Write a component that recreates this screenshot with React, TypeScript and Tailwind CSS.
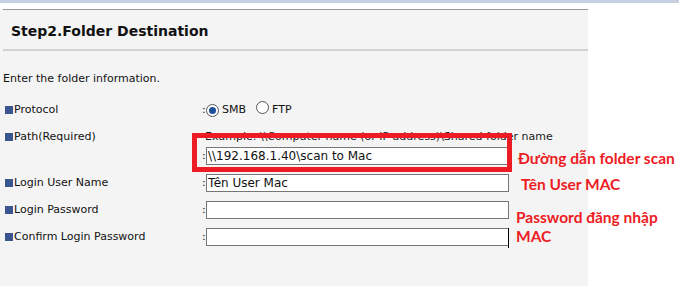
import React from "react";

const Bullet = () => <span className="inline-block w-[8px] h-[8px] bg-[#3b5590] mr-[1px] shrink-0" />;

const Radio = ({ checked }: { checked?: boolean }) => (
  <span className="inline-flex w-[13px] h-[13px] rounded-full border border-[#555] bg-white items-center justify-center shrink-0">
    {checked && <span className="w-[7px] h-[7px] rounded-full bg-[#1a4f9a]" />}
  </span>
);

const Row = ({ label, value, extra }: { label: string; value?: string; extra?: React.ReactNode }) => (
  <div className="flex items-center h-[18px] mt-[9px]">
    <div className="w-[202px] pl-[5px] flex items-center">
      <Bullet />
      <span>{label}</span>
    </div>
    <span className="w-[4px]">:</span>
    <div className="relative w-[303px] h-[18px] border border-[#767676] bg-white pl-[1px] leading-[16px] text-[12px]">
      {value}
      {extra}
    </div>
  </div>
);

export default function App() {
  const font = "font-['DejaVu_Sans',sans-serif]";
  return (
    <div className={`relative w-[679px] h-[286px] bg-white overflow-hidden text-[11px] text-[#111] ${font}`}>
      <div className="h-[3px] bg-[#c6d0e1]" />
      <div className="w-[588px] h-[283px] bg-[#f4f4f4]">
        <div className="h-[6px] bg-white" />
        <div className="ml-[3px] h-px bg-[#999]" />
        <div className="h-[39px] pt-[3px] flex items-center pl-[11px] text-[14px] font-bold text-[#111]">Step2.Folder Destination</div>
        <div className="ml-[3px] h-[2px] bg-[#d2d2d2]" />
        <div className="mt-[20px] h-[16px] pl-[3px] flex items-center">Enter the folder information.</div>
        <div className="mt-[13px] h-[20px] flex items-center">
          <div className="w-[202px] pl-[5px] flex items-center">
            <Bullet />
            <span>Protocol</span>
          </div>
          <span className="w-[4px]">:</span>
          <Radio checked />
          <span className="ml-[3px]">SMB</span>
          <span className="ml-[10px]"><Radio /></span>
          <span className="ml-[3px]">FTP</span>
        </div>
        <div className="mt-[10px] h-[14px] flex items-center">
          <div className="w-[205px] pl-[5px] flex items-center">
            <Bullet />
            <span>Path(Required)</span>
          </div>
          <span className="text-[#222]">Example: \\Computer name (or IP address)\Shared folder name</span>
        </div>
        <div className="flex items-center h-[18px] mt-[3px]">
          <div className="w-[202px]" />
          <span className="w-[4px]">:</span>
          <div className="w-[303px] h-[18px] border border-[#767676] bg-white pl-[1px] leading-[16px] text-[12px]">\\192.168.1.40\scan to Mac</div>
        </div>
        <Row label="Login User Name" value="Tên User Mac" />
        <Row label="Login Password" />
        <Row label="Confirm Login Password" extra={<span className="absolute right-[-1px] top-[-1px] w-px h-[20px] bg-black" />} />
      </div>

      <div className="absolute left-[192px] top-[133px] w-[320px] h-[39px] border-[5px] border-[#ed1c24]" />
      <div className="absolute left-[518px] top-[149px] text-[#ed1c24] font-bold text-[15.5px] leading-[18px] font-['Lato',sans-serif]">Đường dẫn folder scan</div>
      <div className="absolute left-[521px] top-[175px] text-[#ed1c24] font-bold text-[15.5px] leading-[18px] font-['Lato',sans-serif]">Tên User MAC</div>
      <div className="absolute left-[516px] top-[208px] text-[#ed1c24] font-bold text-[15.5px] leading-[19px] font-['Lato',sans-serif]">Password đăng nhập<br />MAC</div>
    </div>
  );
}
